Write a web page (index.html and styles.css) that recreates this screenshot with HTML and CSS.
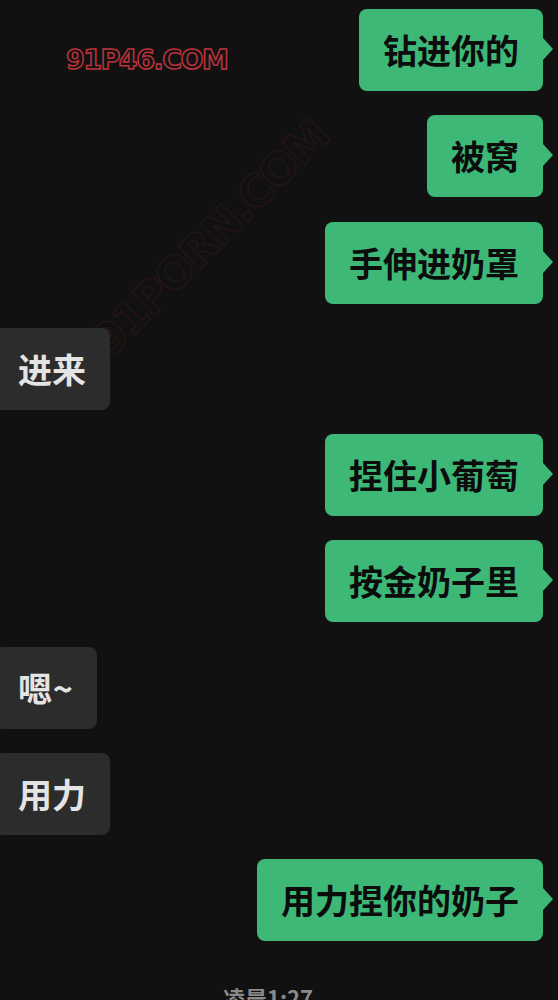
FILE: index.html
```html
<!DOCTYPE HTML><html>
<head>
	<meta name="viewport" charset="UTF-8" content="width=device-width, initial-scale=1">
	<title>聊天</title>
	<link rel="stylesheet" href="styles.css">
</head>
<body>
	<div class="mark">91P46.COM</div>
	<div class="mark-big">91PORN.COM</div>
	<div class="chat">
		<div class="row out"><div class="bubble">钻进你的</div></div>
		<div class="row out"><div class="bubble">被窝</div></div>
		<div class="row out"><div class="bubble">手伸进奶罩</div></div>
		<div class="row in"><div class="bubble">进来</div></div>
		<div class="row out"><div class="bubble">捏住小葡萄</div></div>
		<div class="row out"><div class="bubble">按金奶子里</div></div>
		<div class="row in"><div class="bubble tight">嗯 ~</div></div>
		<div class="row in"><div class="bubble">用力</div></div>
		<div class="row out"><div class="bubble">用力捏你的奶子</div></div>
	</div>
	<div class="time">凌晨1:27</div>
</body>
</html>
```
FILE: styles.css
```css
html {
	font-family: "Noto Sans CJK SC", "Noto Sans", sans-serif;}
body {
	background-color: #111111;
	margin: 0;
	height: 1000px;
	overflow: hidden;
	position: relative;}

.chat {
	display: flex;
	flex-direction: column;
	gap: 24.25px;
	padding-top: 9px;
}
.row {
	display: flex;
}
.row.out {
	justify-content: flex-end;
	padding-right: 15px;
}
.row.in {
	justify-content: flex-start;
	margin-left: -6px;
}
.bubble {
	position: relative;
	height: 82px;
	display: flex;
	align-items: center;
	padding: 0 24px;
	border-radius: 8px;
	font-size: 34px;
	font-weight: 700;
	line-height: 1;
	white-space: nowrap;
}
.bubble.tight {word-spacing: -7px;}
.out .bubble {
	background-color: #3db877;
	color: #0c0c0c;
}
.out .bubble::after {
	content: "";
	position: absolute;
	right: -10px;
	top: 29px;
	border-left: 10px solid #3db877;
	border-top: 11px solid transparent;
	border-bottom: 11px solid transparent;
}
.in .bubble {
	background-color: #2c2c2c;
	color: #e4e4e4;
}

.time {
	text-align: center;
	margin-top: 40px;
	font-size: 22px;
	font-weight: 700;
	color: #8a8a8a;
	padding-right: 22px;
}

/* watermarks */
.mark {
	position: absolute;
	left: 66px;
	top: 44px;
	font-family: "DejaVu Sans", sans-serif;
	font-weight: 700;
	font-size: 27px;
	letter-spacing: -1.5px;
	color: #151111;
	-webkit-text-stroke: 1.5px #b9343c;
}
.mark-big {
	position: absolute;
	left: 30px;
	top: 212px;
	width: 360px;
	text-align: center;
	transform: rotate(-45deg);
	font-family: "DejaVu Sans", sans-serif;
	font-weight: 700;
	font-size: 44px;
	letter-spacing: -2px;
	color: transparent;
	-webkit-text-stroke: 1.2px #2a1515;
}
```
